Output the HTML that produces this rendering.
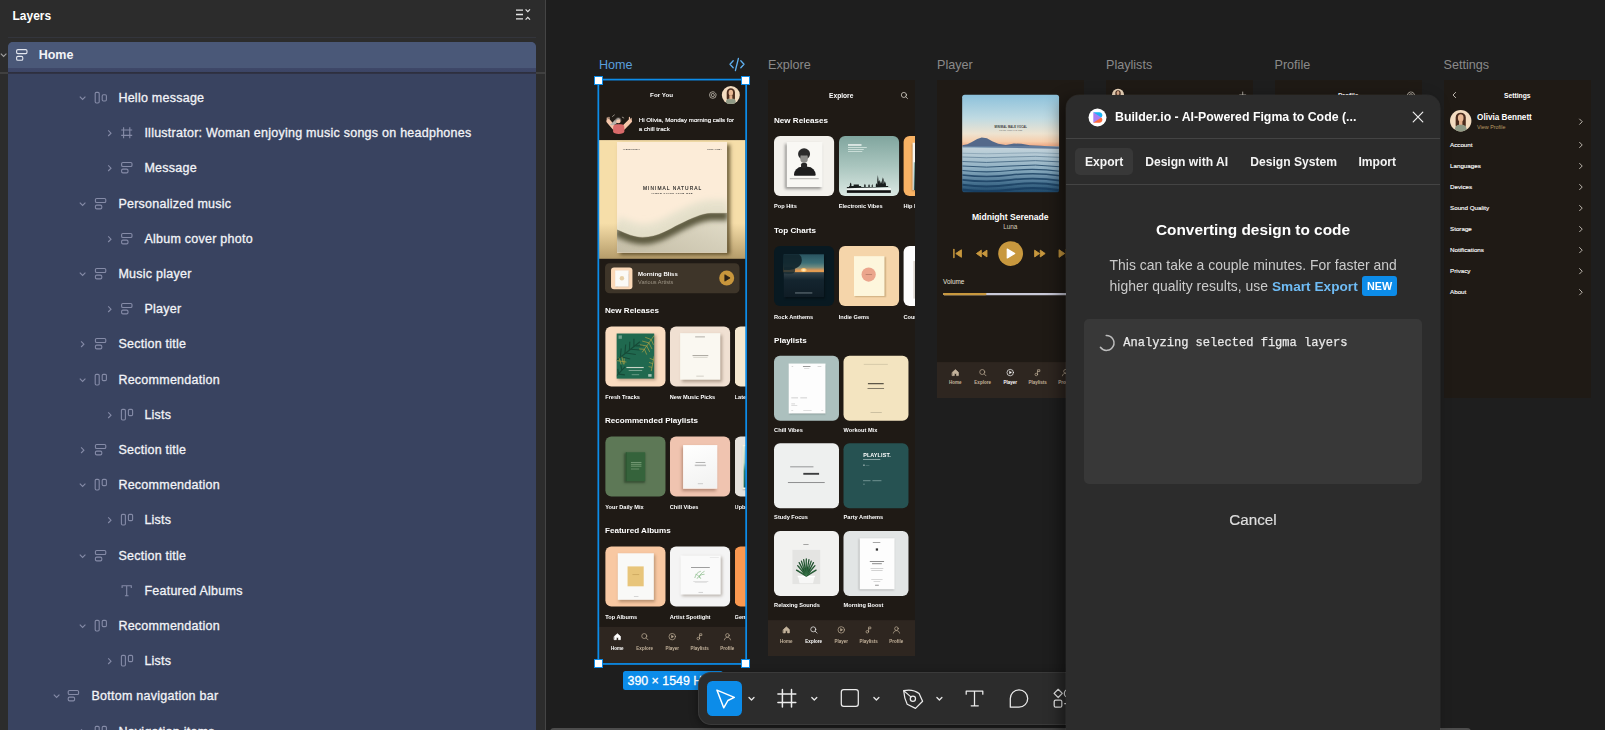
<!DOCTYPE html>
<html lang="en">
<head>
<meta charset="utf-8">
<title>Figma – Music App</title>
<style>
*{box-sizing:border-box;margin:0;padding:0}
html,body{width:1605px;height:730px;overflow:hidden;background:#1e1e1e;font-family:"Liberation Sans",sans-serif;color:#fff}
.abs{position:absolute}
/* ---------- layers panel ---------- */
#panel{position:absolute;left:0;top:0;width:546px;height:730px;background:#2c2c2c;border-right:1px solid #444;overflow:hidden}
#panel .title{position:absolute;left:12.5px;top:8px;font-size:12px;font-weight:bold;line-height:16px;color:#fff}
#sel{position:absolute;left:8px;top:42px;width:528px;height:700px;background:#394360;border-radius:5px 5px 0 0}
#homerow{position:absolute;left:8px;top:42px;width:528px;height:30px;background:linear-gradient(#4a5878 0,#4a5878 26px,#3e4768 26.500px,#3c4565 30px);border-radius:5px 5px 0 0}
#hline{position:absolute;left:0;top:72px;width:545px;height:1.500px;background:#404040}
#hline2{position:absolute;left:8px;top:72px;width:528px;height:2px;background:linear-gradient(#2c2e3a,#31344a)}
#tline{position:absolute;left:8px;top:37px;width:528px;height:1px;background:#33353c}
.row{position:absolute;left:0;height:20px;font-size:12.5px;letter-spacing:.25px;line-height:20px;color:#f2f3f7;white-space:nowrap;-webkit-text-stroke:0.3px #f2f3f7}
.row span{position:absolute;top:0}
/* ---------- canvas ---------- */
#canvas{position:absolute;left:546px;top:0;width:1059px;height:730px;background:#1e1e1e;overflow:hidden}
.flabel{position:absolute;top:57px;font-size:12.6px;line-height:16px;color:#8a8a8a;white-space:nowrap}
.frame{position:absolute;background:#1f1a15;overflow:hidden}
.fc{position:absolute;top:0;width:390px;height:1600px;transform:scale(.3756);transform-origin:0 0}
.frame .t{position:absolute;white-space:nowrap;line-height:1;color:#fff}
.frame .sec{position:absolute;left:16px;font-size:21.5px;font-weight:bold;line-height:24px;color:#fff;white-space:nowrap}
.frame .card{position:absolute;width:160px;height:160px;border-radius:16px;overflow:hidden}
.frame .card.g{width:173px;height:173px}
.frame .card i{position:absolute;display:block;font-style:normal}
.frame .cl{position:absolute;font-size:15px;font-weight:bold;line-height:18px;color:#fff;white-space:nowrap}
.frame .hdr{position:absolute;top:30px;left:0;width:390px;text-align:center;font-size:17px;font-weight:bold;line-height:22px;color:#fff}
.nav{position:absolute;left:-2px;width:396px;height:110px;background:#2e2620}
.nav .ni{position:absolute;top:0;width:74px;height:94px;margin-left:2px;text-align:center;color:#c4b39c;font-size:12px;font-weight:bold}
.nav .ni svg{position:absolute;left:25px;top:14px;width:24px;height:24px;fill:none;stroke:#c4b39c;stroke-width:1.8;stroke-linecap:round;stroke-linejoin:round}
.nav .ni span{position:absolute;left:0;top:48px;width:74px;line-height:16px}
.nav .ni.on{color:#fff}
.nav .ni.on svg{stroke:#fff}
.avatar{position:absolute;border-radius:50%;background:#f3dcc0;overflow:hidden}
.avatar i{position:absolute;display:block}
.shadow{box-shadow:4px 5px 8px rgba(60,40,20,.35)}
.srow{position:absolute;left:16px;width:358px;height:24px;font-size:16.600px;line-height:24px;color:#fff;-webkit-text-stroke:.35px #fff}
.srow svg{position:absolute;right:0;top:2px}
/* ---------- overlay ---------- */
.hd{position:absolute;width:9.200px;height:9.200px;background:#fff;border:1.400px solid #0c8ce9}
#sizepill{position:absolute;left:76.700px;top:671px;width:100px;height:19px;border-radius:2.500px;background:#0c8ce9;color:#fff;font-size:12.400px;line-height:21.500px;padding-left:4.800px;white-space:nowrap;-webkit-text-stroke:.3px #fff}
/* ---------- toolbar ---------- */
#toolbar{position:absolute;left:698px;top:672px;width:420px;height:52.700px;border-radius:13px;background:#2c2c2c;box-shadow:inset 0 0 0 1px rgba(255,255,255,.07),0 2px 8px rgba(0,0,0,.4)}
#toolbar .act{position:absolute;left:9.100px;top:9px;width:35px;height:35px;border-radius:5.500px;background:#0c8ce9}
#toolbar svg{position:absolute;left:0;top:0}
/* ---------- dialog ---------- */
#dialog{position:absolute;left:1066px;top:95px;width:374px;height:660px;border-radius:13px 13px 0 0;background:#2c2c2c;box-shadow:0 0 0 .5px rgba(255,255,255,.07),-6px 4px 16px rgba(0,0,0,.45);color:#fff}
#dialog .hl{position:absolute;left:0;width:374px;height:1px;background:#444}
#dialog .ttl{position:absolute;left:49px;top:13px;font-size:12.340px;font-weight:bold;line-height:18px;white-space:nowrap}
#dialog .tab{position:absolute;top:58px;font-size:12.100px;font-weight:bold;line-height:18px;white-space:nowrap;color:#f4f4f4}
#dialog .tabbg{position:absolute;left:9px;top:53px;width:58px;height:27px;border-radius:5px;background:#383838}
#dialog h2{position:absolute;left:0;top:124px;width:374px;text-align:center;font-size:15.400px;font-weight:bold;line-height:22px;color:#fff}
#dialog p{position:absolute;left:43.600px;top:160.300px;width:300px;font-size:13.900px;letter-spacing:.035px;line-height:20.400px;color:#cbcbcb;white-space:nowrap}
#dialog p b{color:#6fbcf5;font-size:13.600px}
#dialog p em{display:inline-block;font-style:normal;font-weight:bold;font-size:10.800px;line-height:20px;height:20.300px;width:34.500px;text-align:center;background:#0c8ce9;color:#fff;border-radius:3px;margin-left:4.600px;vertical-align:1px}
#dialog .box{position:absolute;left:18px;top:224px;width:338px;height:164.500px;border-radius:5px;background:#383838}
#dialog .mono{position:absolute;left:57.300px;top:239.300px;font-family:"Liberation Mono",monospace;font-size:12.060px;line-height:18px;color:#e9e9e9;white-space:nowrap;-webkit-text-stroke:.25px #e9e9e9}
#dialog .cancel{position:absolute;left:0;top:414px;width:374px;text-align:center;font-size:15.200px;line-height:22px;color:#dedede;-webkit-text-stroke:.2px #dedede}
#hscroll{position:absolute;left:550px;top:728px;width:921px;height:8px;border-radius:4px;background:#4d4d4d}
</style>
</head>
<body>
<div id="canvas">
  <div class="flabel" style="left:53px;color:#5a9fdc">Home</div>
  <div class="flabel" style="left:222px">Explore</div>
  <div class="flabel" style="left:391px">Player</div>
  <div class="flabel" style="left:560px">Playlists</div>
  <div class="flabel" style="left:728.500px">Profile</div>
  <div class="flabel" style="left:897.500px">Settings</div>
<div class="frame" style="left:52.65px;top:80.20px;width:146.95px;height:583.30px"><div class="fc" style="left:0.35px;top:-0.20px">
<div class="t" style="left:136px;top:31px;font-size:16.6px;font-weight:bold;line-height:20px">For You</div>
<svg class="abs" style="left:291px;top:28px" width="24" height="24" viewBox="0 0 24 24" fill="none" stroke="#e9e2d6" stroke-width="1.7"><circle cx="12" cy="12" r="4.2"/><path d="M12 3.2a8.8 8.8 0 1 0 8.8 8.8" /><path d="M12 3.2c3 .2 5.2 1.4 6.9 3.6M20.8 12c0-1.800-.6-3.500-1.500-4.900" /></svg>
<div class="avatar" style="left:327px;top:16px;width:48px;height:48px"><i style="left:13px;top:6px;width:22px;height:34px;border-radius:11px 11px 8px 8px;background:#4a2c1d"></i><i style="left:18px;top:10px;width:12px;height:16px;border-radius:50%;background:#e8b894"></i><i style="left:11px;top:33px;width:26px;height:18px;border-radius:10px 10px 0 0;background:#8f9a86"></i><i style="left:20px;top:25px;width:8px;height:10px;background:#e2ae8a"></i></div>
<svg class="abs" style="left:14px;top:90px" width="80" height="56" viewBox="14 90 80 56" fill="none"><g stroke="#f5c6aa" stroke-width="11" stroke-linecap="round"><path d="M40 127L25 109.500M65 127L82.500 109.500"/></g><g stroke="#f5c6aa" stroke-width="3" stroke-linecap="round"><path d="M22 106v-5M26.500 105.500v-6M81 105.500v-6M85.500 106v-4"/></g><path d="M37.500 138v-11a9 9 0 0 1 9-9h12a9 9 0 0 1 9 9v11a15 5.500 0 0 1-30 0z" fill="#d96a6a"/><path d="M46 104c-7 3-9 11-17 15 7 3 15 1 19-5z" fill="#b9b2ab"/><circle cx="51.500" cy="109" r="6.400" fill="#f3c9b0"/><path d="M44.800 108a6.800 6.800 0 0 1 13.200-2.500c-4.500-1.500-9 0-13.200 2.500z" fill="#a59e98"/><path d="M44.500 110v-3a7 7 0 0 1 14 0v3" stroke="#6e6a66" stroke-width="1.500"/><path d="M36 97l5-4M62 99l4 2" stroke="#e9e2d6" stroke-width="1.500" stroke-linecap="round"/></svg>
<div class="t" style="left:106px;top:94px;font-size:16.2px;line-height:24px;white-space:normal;width:270px;-webkit-text-stroke:.4px #fff;letter-spacing:.1px">Hi Olivia, Monday morning calls for<br>a chill track</div>
<div class="abs" style="left:0;top:160px;width:390px;height:316px;background:linear-gradient(#f6dea9 0,#f6dea9 70%,#b59c6a 100%)"></div>
<div class="abs" style="left:48px;top:165px;width:293px;height:295px;background:#fcecd8;box-shadow:8px 7px 10px rgba(50,38,10,.7);overflow:hidden"><svg class="abs" style="left:0;top:0" width="293" height="295" viewBox="0 0 293 295"><defs><filter id="b1" filterUnits="userSpaceOnUse" x="-60" y="60" width="420" height="300"><feGaussianBlur stdDeviation="9"/></filter><filter id="b2" filterUnits="userSpaceOnUse" x="-60" y="60" width="420" height="300"><feGaussianBlur stdDeviation="7"/></filter><clipPath id="cu"><path d="M-2 233C25 245 45 254 68 254c42 0 72-22 97-34 35-17 60-29 85-30 15-.5 30 0 45 0V-5H-2z"/></clipPath><clipPath id="cl"><path d="M-2 233C25 245 45 254 68 254c42 0 72-22 97-34 35-17 60-29 85-30 15-.5 30 0 45 0V300H-2z"/></clipPath><linearGradient id="lw" x1="0" y1="1" x2="1" y2="0"><stop offset="0" stop-color="#c4bda6"/><stop offset=".55" stop-color="#d5cfba"/><stop offset="1" stop-color="#e6e1cd"/></linearGradient></defs><g clip-path="url(#cu)"><path d="M-2 233C25 245 45 254 68 254c42 0 72-22 97-34 35-17 60-29 85-30 15-.5 30 0 45 0" transform="translate(0,-14)" fill="none" stroke="#e7e2cd" stroke-width="44" filter="url(#b1)"/><path d="M-2 233C25 245 45 254 68 254c42 0 72-22 97-34 35-17 60-29 85-30 15-.5 30 0 45 0" transform="translate(0,-5)" fill="none" stroke="#dedac3" stroke-width="12" filter="url(#b2)" opacity=".7"/></g><g clip-path="url(#cl)"><rect x="0" y="180" width="293" height="115" fill="url(#lw)"/><path d="M-2 233C25 245 45 254 68 254c42 0 72-22 97-34 35-17 60-29 85-30 15-.5 30 0 45 0" transform="translate(0,6)" fill="none" stroke="#5d5a40" stroke-width="26" filter="url(#b2)"/></g><path d="M-2 233C25 245 45 254 68 254c42 0 72-22 97-34 35-17 60-29 85-30 15-.5 30 0 45 0" fill="none" stroke="#6a6649" stroke-width="1.200" opacity=".8"/></svg><div class="t" style="left:0;width:293px;top:117px;text-align:center;font-size:13px;letter-spacing:2.700px;color:#1f1f1f;padding-left:3px;-webkit-text-stroke:.35px #1f1f1f">MINIMAL NATURAL</div><div class="t" style="left:0;width:293px;top:134px;text-align:center;font-size:6.200px;font-weight:bold;letter-spacing:1.500px;color:#2a2a2a">ALBUM COVER FROM WEB</div><div class="t" style="left:15px;top:17px;font-size:5.500px;font-weight:bold;letter-spacing:.3px;color:#444">ALBUM STUDIO</div><div class="t" style="right:15px;top:17px;font-size:5.500px;font-weight:bold;letter-spacing:.3px;color:#444">SONG 1 2024</div></div>
<div class="abs" style="left:16px;top:488px;width:358px;height:80px;border-radius:12px;background:#3e3529"></div>
<div class="abs" style="left:32px;top:499px;width:57px;height:58px;border-radius:8px;background:#fbd9b8"><i class="abs" style="left:11px;top:8px;width:36px;height:43px;background:#fbfaf6;box-shadow:1px 2px 3px rgba(0,0,0,.25)"></i><i class="abs" style="left:23px;top:23px;width:12px;height:12px;border-radius:50%;background:#e6cfa6"></i></div>
<div class="t" style="left:104px;top:508px;font-size:16px;font-weight:bold;line-height:20px">Morning Bliss</div>
<div class="t" style="left:104px;top:529px;font-size:14.9px;line-height:18px;color:#9c9384">Various Artists</div>
<div class="abs" style="left:320px;top:507px;width:40px;height:40px;border-radius:50%;background:#c8963c"><svg class="abs" style="left:0;top:0" width="40" height="40" viewBox="0 0 40 40"><path d="M15 11.500v17l14-8.500z" fill="#2a2016" stroke="#2a2016" stroke-width="2" stroke-linejoin="round"/></svg></div>
<div class="sec" style="top:602px">New Releases</div>
<div class="card" style="left:16.5px;top:655.5px;background:#fadcc0"><i class="shadow" style="left:30px;top:19px;width:100px;height:120px;background:#20694f;overflow:hidden"><svg width="100" height="120" viewBox="0 0 100 120" style="position:absolute;left:0;top:0"><g stroke="#164a37" stroke-width="3" fill="none"><path d="M-5 75L62 22"/><path d="M10 62l2-22M22 53l2-24M34 44l1-22M46 34l0-20M12 62l24 6M25 52l26 4M38 42l24 2M50 33l20 0"/><path d="M-5 118l28-30M5 108l-2-14M14 98l-3-14M6 108l16 2"/></g><g stroke="#c7ad45" stroke-width="1.6" fill="none"><path d="M100 5L68 50"/><path d="M92 16l-16-6M86 25l-18-5M80 33l-18-3M74 42l-14-1M92 16l6 14M86 25l8 16M80 33l8 16M74 42l6 14"/><path d="M0 72l26 4M6 64l6 18M14 62l4 20M20 66l0 16M100 60l-8 40M98 70l-10-4M96 80l-10-3M94 90l-9-2"/></g></svg><b style="position:absolute;left:26px;top:89px;width:46px;height:3px;background:#e7e7da;opacity:.85"></b><b style="position:absolute;left:32px;top:97px;width:36px;height:2px;background:#cfe0d0;opacity:.7"></b><b style="position:absolute;left:40px;top:108px;width:20px;height:3px;background:#9fc0ae;opacity:.5"></b><b style="position:absolute;left:84px;top:108px;width:9px;height:7px;background:#dfe8df;opacity:.7"></b><b style="position:absolute;left:5px;top:5px;width:9px;height:9px;background:#bcd6c8;opacity:.5"></b></i></div>
<div class="cl" style="left:16.5px;top:836.0px">Fresh Tracks</div>
<div class="card" style="left:188.5px;top:655.5px;background:#f0e0d2"><i class="shadow" style="left:27px;top:18px;width:107px;height:124px;background:#faf8f1"></i><i style="left:67px;top:27px;width:26px;height:2px;background:#9a978f"></i><i style="left:60px;top:77px;width:42px;height:2px;background:#8c8980"></i><i style="left:62px;top:82px;width:38px;height:1.5px;background:#aaa79e"></i><i style="left:70px;top:131px;width:20px;height:3px;background:#d8d5cc"></i></div>
<div class="cl" style="left:188.5px;top:836.0px">New Music Picks</div>
<div class="card" style="left:361px;top:655.5px;background:#f5e8d0"></div>
<div class="cl" style="left:361px;top:836.0px">Latest Hits</div>
<div class="sec" style="top:895px">Recommended Playlists</div>
<div class="card" style="left:16.5px;top:948.5px;background:#5d7856"><i style="left:54px;top:42px;width:52px;height:77px;background:#35633b;box-shadow:-3px 4px 6px rgba(20,40,20,.5),inset 3px 0 0 #2d5632;border-radius:1px"></i><i style="left:68px;top:68px;width:28px;height:2px;background:#86a883"></i><i style="left:68px;top:73px;width:28px;height:2px;background:#86a883"></i><i style="left:68px;top:78px;width:28px;height:2px;background:#86a883"></i><i style="left:68px;top:84px;width:22px;height:1.500px;background:#7a9c77"></i><i style="left:68px;top:88px;width:22px;height:1.500px;background:#7a9c77"></i></div>
<div class="cl" style="left:16.5px;top:1129.0px">Your Daily Mix</div>
<div class="card" style="left:188.5px;top:948.5px;background:#f0c4b0"><i style="left:35px;top:23px;width:91px;height:116px;background:linear-gradient(160deg,#fff,#f1f1f0);box-shadow:-4px 5px 8px rgba(90,50,30,.4)"></i><i style="left:68px;top:68px;width:26px;height:2px;background:#9b9b9b"></i><i style="left:66px;top:75px;width:30px;height:4px;background:#c2c2c2"></i><i style="left:74px;top:125px;width:14px;height:2px;background:#bdbdbd"></i></div>
<div class="cl" style="left:188.5px;top:1129.0px">Chill Vibes</div>
<div class="card" style="left:361px;top:948.5px;background:#e6e2dd"><i style="left:21px;top:22px;width:30px;height:118px;background:#f6f1dc;box-shadow:2px 3px 5px rgba(0,0,0,.3)"></i><i style="left:24px;top:26px;width:27px;height:110px;background:linear-gradient(#cfe0d6 0,#9cc5b8 40%,#2c7a6c 60%,#1f5f58 100%)"></i></div>
<div class="cl" style="left:361px;top:1129.0px">Upbeat</div>
<div class="sec" style="top:1188px">Featured Albums</div>
<div class="card" style="left:16.5px;top:1241.5px;background:#f8c8a2"><i class="shadow" style="left:33px;top:18px;width:96px;height:124px;background:#f9f9f7"></i><i style="left:59px;top:53px;width:43px;height:53px;background:#e8c57a"></i><i style="left:72px;top:74px;width:18px;height:2px;background:#c9a55c"></i><i style="left:76px;top:132px;width:12px;height:2px;background:#c9c9c9"></i></div>
<div class="cl" style="left:16.5px;top:1422.0px">Top Albums</div>
<div class="card" style="left:188.5px;top:1241.5px;background:#f4f4f4"><i class="shadow" style="left:28px;top:24px;width:107px;height:104px;background:#fafafa"></i><i style="left:56px;top:55px;width:50px;height:2.5px;background:#808080"></i><svg style="position:absolute;left:62px;top:62px" width="40" height="26" viewBox="0 0 40 26"><g fill="none" stroke="#8fbf8f" stroke-width="2"><path d="M4 22c2-10 8-16 16-18M10 24c4-8 10-12 20-12M16 22c0-8 6-14 14-18M6 12c6 2 12 6 14 12"/></g></svg><i style="left:62px;top:92px;width:40px;height:1.500px;background:#b0b0b0"></i><i style="left:66px;top:96px;width:32px;height:1.500px;background:#c0c0c0"></i><i style="left:76px;top:121px;width:12px;height:2px;background:#c5c5c5"></i><i style="left:106px;top:28px;width:24px;height:1.500px;background:#cfcfcf"></i></div>
<div class="cl" style="left:188.5px;top:1422.0px">Artist Spotlight</div>
<div class="card" style="left:361px;top:1241.5px;background:#fa9850"></div>
<div class="cl" style="left:361px;top:1422.0px">Genre Mix</div>
<div class="nav" style="top:1455.5px"><div class="ni on" style="left:11.5px"><svg viewBox="0 0 24 24"><path d="M4 11.2L12 4l8 7.2V20h-5.2v-5.6H9.2V20H4z" fill="#fff"/></svg><span style="top:49px">Home</span></div><div class="ni" style="left:84.5px"><svg viewBox="0 0 24 24"><circle cx="10.5" cy="10.5" r="6.7"/><path d="M15.6 15.6L20.5 20.5"/></svg><span style="top:49px">Explore</span></div><div class="ni" style="left:158px"><svg viewBox="0 0 24 24"><circle cx="12" cy="12" r="8.6"/><path d="M10 8.6v6.8l5.4-3.4z" fill="#c4b39c" stroke-width="1"/></svg><span style="top:49px">Player</span></div><div class="ni" style="left:231px"><svg viewBox="0 0 24 24"><circle cx="8.4" cy="17" r="3.4"/><path d="M11.800 17V4.400h6v4.600h-6"/></svg><span style="top:49px">Playlists</span></div><div class="ni" style="left:304.5px"><svg viewBox="0 0 24 24"><circle cx="12" cy="8.6" r="4.8"/><path d="M3.8 20.6c.8-4.200 3.800-6.600 8.200-6.600s7.400 2.400 8.200 6.600"/></svg><span style="top:49px">Profile</span></div></div>
</div></div>
<div class="frame" style="left:222.07px;top:80.10px;width:146.90px;height:576.00px"><div class="fc" style="left:-0.05px;top:-0.10px">
<div class="hdr" style="font-size:17.6px">Explore</div>
<svg class="abs" style="left:351px;top:29px" width="24" height="24" viewBox="0 0 24 24" fill="none" stroke="#f1ebe2" stroke-width="1.800" stroke-linecap="round"><circle cx="10.800" cy="10.800" r="6.800"/><path d="M15.900 15.900L20.500 20.500"/></svg>
<div class="sec" style="top:95px">New Releases</div>
<div class="card" style="left:16px;top:148.5px;background:#f3f1ec"><i style="left:34px;top:16px;width:95px;height:120px;background:#f9f8f4;box-shadow:-5px 5px 7px rgba(40,40,40,.45)"></i><i style="left:64px;top:33px;width:32px;height:30px;border-radius:50%;background:#2b2b2b"></i><i style="left:70px;top:46px;width:20px;height:26px;border-radius:45%;background:#8d8d8a"></i><i style="left:67px;top:40px;width:26px;height:12px;border-radius:50% 50% 30% 30%;background:#2b2b2b"></i><i style="left:53px;top:82px;width:58px;height:24px;border-radius:26px 26px 3px 3px;background:#1e1e1e"></i><i style="left:72px;top:72px;width:16px;height:14px;background:#262626;border-radius:4px"></i><i style="left:42px;top:113px;width:77px;height:2.500px;background:#9a9a98"></i></div>
<div class="cl" style="left:16px;top:328.0px">Pop Hits</div>
<div class="card" style="left:188.5px;top:148.5px;background:linear-gradient(#80a59e,#a9c5be 50%,#dbe8e3)"><i style="left:24px;top:22px;width:36px;height:4px;background:#eef5f2"></i><i style="left:24px;top:30px;width:50px;height:2px;background:#dcebe6"></i><i style="left:24px;top:35px;width:42px;height:2px;background:#dcebe6"></i><i style="left:24px;top:40px;width:38px;height:2px;background:#dcebe6"></i><svg style="position:absolute;left:0;top:0" width="160" height="160" viewBox="0 0 160 160"><rect x="21" y="138.500" width="117" height="6" fill="#f4f8f6"/><rect x="21" y="144.500" width="117" height="7" fill="#111"/><path d="M21 139V136h6v-3h2v-5l2-4 2 4v5h6v-4h14v4h6v3h8v-5l2-4 2 4v5h7v-4l2-4 2 4v4h5v-4l1.500-4 1.500 4v4h8v-6l2-5 2 5v-14l1.500-12 1.500 12v6l2-5 2 5v6l3-9 3 9v-11l2-7 2 7v11l3-8 3 8v5h6v3z" fill="#1a1f1f"/></svg></div>
<div class="cl" style="left:188.5px;top:328.0px">Electronic Vibes</div>
<div class="card" style="left:360.5px;top:148.5px;background:#f8b264"><i style="left:24px;top:18px;width:40px;height:126px;background:#f7f5ef;box-shadow:-2px 3px 5px rgba(0,0,0,.3)"></i><i style="left:27px;top:70px;width:37px;height:74px;background:linear-gradient(#8fb3aa,#264a4c)"></i></div>
<div class="cl" style="left:360.5px;top:328.0px">Hip Hop</div>
<div class="sec" style="top:388px">Top Charts</div>
<div class="card" style="left:16px;top:441.5px;background:#081921"><i style="left:26px;top:22px;width:107px;height:114px;background:linear-gradient(#29535f 0,#3c6f77 20%,#6f8a7f 30%,#dc9858 37%,#f2a350 40%,#33434b 43%,#14252f 60%,#0f1c25 100%);box-shadow:3px 4px 6px rgba(0,0,0,.5);overflow:hidden"><b style="position:absolute;left:44px;top:36px;width:18px;height:12px;border-radius:50%;background:radial-gradient(#fff6dc,#ffc36a 50%,rgba(240,160,80,0) 72%)"></b><b style="position:absolute;left:-14px;top:-8px;width:62px;height:50px;border-radius:40% 60% 70% 30%;background:#10242b;opacity:.92"></b><b style="position:absolute;left:-4px;top:34px;width:34px;height:18px;border-radius:40%;background:#132830;opacity:.8"></b><b style="position:absolute;left:30px;top:102px;width:46px;height:2.500px;background:#a9b7bb;opacity:.8"></b></i></div>
<div class="cl" style="left:16px;top:621.0px">Rock Anthems</div>
<div class="card" style="left:188.5px;top:441.5px;background:#f5d5aa"><i style="left:40px;top:27px;width:81px;height:106px;background:#fdf6dc;box-shadow:3px 3px 3px rgba(150,120,70,.4)"></i><i style="left:60px;top:57px;width:38px;height:38px;border-radius:50%;background:#eba58c"></i><i style="left:71px;top:75px;width:17px;height:2px;background:#b27a66"></i></div>
<div class="cl" style="left:188.5px;top:621.0px">Indie Gems</div>
<div class="card" style="left:360.5px;top:441.5px;background:#fdfdfd"><i style="left:26px;top:40px;width:20px;height:100px;background:#dcd6cf"></i></div>
<div class="cl" style="left:360.5px;top:621.0px">Country</div>
<div class="sec" style="top:679.500px">Playlists</div>
<div class="card g" style="left:16.3px;top:733.5px;background:#acc0be"><i style="left:39px;top:21px;width:98px;height:133px;background:#fdfdfd;box-shadow:2px 3px 4px rgba(40,60,60,.35)"></i><i style="left:77px;top:28px;width:20px;height:2.5px;background:#777"></i><i style="left:80px;top:33px;width:14px;height:1.5px;background:#aaa"></i><i style="left:47px;top:28px;width:4px;height:1.5px;background:#999"></i><i style="left:116px;top:28px;width:10px;height:1.5px;background:#999"></i><i style="left:46px;top:112px;width:18px;height:1.5px;background:#888"></i><i style="left:70px;top:112px;width:18px;height:1.5px;background:#888"></i><i style="left:46px;top:128px;width:10px;height:1.5px;background:#999"></i><i style="left:46px;top:132px;width:16px;height:1.5px;background:#aaa"></i><i style="left:46px;top:145px;width:5px;height:1.5px;background:#aaa"></i><i style="left:78px;top:145px;width:22px;height:1.5px;background:#aaa"></i><i style="left:126px;top:145px;width:5px;height:1.5px;background:#aaa"></i></div>
<div class="cl" style="left:16.3px;top:922.5px">Chill Vibes</div>
<div class="card g" style="left:201.3px;top:733.5px;background:#f3e4c0"><i style="left:54px;top:22px;width:64px;height:1.8px;background:#a89f84"></i><i style="left:65px;top:73px;width:42px;height:3.5px;background:#4b4638"></i><i style="left:64px;top:86px;width:44px;height:2px;background:#5e584a"></i><i style="left:72px;top:150px;width:30px;height:1.8px;background:#8b846f"></i></div>
<div class="cl" style="left:201.3px;top:922.5px">Workout Mix</div>
<div class="card g" style="left:16.3px;top:967.0px;background:#eef0ef"><i style="left:43px;top:62px;width:62px;height:2px;background:#77797a"></i><i style="left:78px;top:79px;width:42px;height:4.5px;background:#3c3e3f"></i><i style="left:37px;top:104px;width:98px;height:2px;background:#6d6f70"></i></div>
<div class="cl" style="left:16.3px;top:1156.0px">Study Focus</div>
<div class="card g" style="left:201.3px;top:967.0px;background:#265252"><div class="t" style="left:52px;top:24px;font-size:14.500px;font-weight:bold;letter-spacing:.3px">PLAYLIST.</div><i style="left:52px;top:42px;width:46px;height:2px;background:#a9c1c0"></i><i style="left:53px;top:57px;width:3px;height:3px;background:#e8f0ef"></i><i style="left:59px;top:57.5px;width:10px;height:1.5px;background:#7fa09f"></i><i style="left:52px;top:99px;width:20px;height:2px;background:#86a5a4"></i><i style="left:77px;top:99px;width:24px;height:2px;background:#86a5a4"></i><i style="left:53px;top:108px;width:3px;height:2px;background:#a9c1c0"></i></div>
<div class="cl" style="left:201.3px;top:1156.0px">Party Anthems</div>
<div class="card g" style="left:16.3px;top:1200.5px;background:#f2f2f0"><i style="left:48.700px;top:50.300px;width:74px;height:91.500px;background:#e4e4e2"></i><i style="left:78px;top:35px;width:14px;height:2px;background:#8a8a8a"></i><svg style="position:absolute;left:48.700px;top:50.300px" width="74" height="92" viewBox="0 0 74 92"><path d="M15 70h44l-4 19H19z" fill="#f7f7f6"/><path d="M14 69h46v4H14z" fill="#fff"/><g stroke="#21512f" stroke-width="3.400" stroke-linecap="round" fill="none"><path d="M37 70V24M37 70L24 30M37 70L50 30M37 70L14 42M37 70L60 42M37 70L30 26M37 70L44 26M37 70L11 54M37 70L63 54M37 70L18 34M37 70L56 34"/></g><g stroke="#3f7f50" stroke-width="1.500" stroke-linecap="round" fill="none"><path d="M37 68V28M37 68L26 34M37 68L48 34M37 68L18 44M37 68L56 44M37 68L15 55M37 68L59 55"/></g></svg></div>
<div class="cl" style="left:16.3px;top:1389.5px">Relaxing Sounds</div>
<div class="card g" style="left:201.3px;top:1200.5px;background:#e2e5e5"><i style="left:43px;top:19px;width:92.500px;height:136px;background:#fdfdfd;box-shadow:-2px 3px 5px rgba(60,60,60,.35)"></i><i style="left:78px;top:29px;width:20px;height:2px;background:#888"></i><i style="left:86px;top:46px;width:6px;height:6px;background:#333"></i><i style="left:70px;top:80px;width:38px;height:2.2px;background:#666"></i><i style="left:76px;top:86px;width:26px;height:2.2px;background:#666"></i><i style="left:72px;top:99px;width:34px;height:1.8px;background:#888"></i><i style="left:74px;top:105px;width:30px;height:1.8px;background:#888"></i><i style="left:74px;top:129px;width:30px;height:1.5px;background:#999"></i><i style="left:80px;top:134px;width:18px;height:1.5px;background:#999"></i><i style="left:84px;top:143px;width:10px;height:2px;background:#777"></i></div>
<div class="cl" style="left:201.3px;top:1389.5px">Morning Boost</div>
<div class="nav" style="top:1437.6px"><div class="ni" style="left:11.5px"><svg viewBox="0 0 24 24"><path d="M4 11.2L12 4l8 7.2V20h-5.2v-5.6H9.2V20H4z" fill="#c4b39c"/></svg><span>Home</span></div><div class="ni on" style="left:84.5px"><svg viewBox="0 0 24 24"><circle cx="10.5" cy="10.5" r="6.7"/><path d="M15.6 15.6L20.5 20.5"/></svg><span>Explore</span></div><div class="ni" style="left:158px"><svg viewBox="0 0 24 24"><circle cx="12" cy="12" r="8.6"/><path d="M10 8.6v6.8l5.4-3.4z" fill="#c4b39c" stroke-width="1"/></svg><span>Player</span></div><div class="ni" style="left:231px"><svg viewBox="0 0 24 24"><circle cx="8.4" cy="17" r="3.4"/><path d="M11.800 17V4.400h6v4.600h-6"/></svg><span>Playlists</span></div><div class="ni" style="left:304.5px"><svg viewBox="0 0 24 24"><circle cx="12" cy="8.6" r="4.8"/><path d="M3.8 20.6c.8-4.200 3.800-6.600 8.200-6.600s7.400 2.400 8.200 6.600"/></svg><span>Profile</span></div></div>
</div></div>
<div class="frame" style="left:391.05px;top:80.20px;width:146.90px;height:317.60px"><div class="fc" style="left:-0.01px;top:-0.20px">
<div class="abs" style="left:66.500px;top:39px;width:258.500px;height:260px;border-radius:7px;overflow:hidden;background:linear-gradient(#8cc1db 0,#bfdae2 24%,#eee3d0 40%,#f6cfad 48%,#efaa85 52.500%,#c3d3db 54%,#b3c9d4 62%,#8eafc2 76%,#45708f 91%,#1f4869 100%)"><svg class="abs" style="left:0;top:0" width="260" height="260" viewBox="0 0 260 260"><path d="M0 139v-4l14-3 12-6 14-8 12-4 14 2 14 8 16 7 20 3 22-4 20 1 22 4 30 1 34 3 16 1v4z" fill="#54698a"/><path d="M0 138h260v3H0z" fill="#6f8fae"/><g stroke="#163c5e" fill="none" opacity=".78"><path d="M0 156q65 3 130 0t130 1" stroke-width=".8"/><path d="M0 166q65 4 130 0t130 1" stroke-width="1.300"/><path d="M0 178q65 5 130 0t130 1" stroke-width="2"/><path d="M0 190q65 6 130 0t130 2" stroke-width="2.600"/><path d="M0 202q65 7 130 0t130 2" stroke-width="3.200"/><path d="M0 214q65 8 130 0t130 2" stroke-width="3.800"/><path d="M0 227q65 8 130 0t130 2" stroke-width="4.400"/><path d="M0 240q65 9 130 0t130 2" stroke-width="5"/><path d="M0 253q65 9 130 0t130 2" stroke-width="6"/></g></svg><div class="t" style="left:0;width:260px;top:83px;text-align:center;font-size:7px;font-weight:bold;letter-spacing:.5px;color:#333">MINIMAL MALE VOCAL</div><div class="t" style="left:0;width:260px;top:93px;text-align:center;font-size:4.500px;letter-spacing:.5px;color:#666">COVER FROM THE WEB</div></div>
<div class="t" style="left:0;width:390px;text-align:center;top:353px;font-size:22.800px;font-weight:bold;line-height:26px">Midnight Serenade</div>
<div class="t" style="left:0;width:390px;text-align:center;top:383px;font-size:17px;line-height:18px;color:#d6cbbb">Luna</div>
<svg class="abs" style="left:0;top:428px" width="390" height="68" viewBox="0 0 390 68"><circle cx="196" cy="34" r="33" fill="#c8983e"/><path d="M187 22v24l20-12z" fill="#fff" stroke="#fff" stroke-width="3" stroke-linejoin="round"/><g fill="#c8983e" stroke="#c8983e" stroke-width="2.500" stroke-linejoin="round"><path d="M45 23.500v21" stroke-width="4" stroke-linecap="round"/><path d="M65 24v20l-15-10z"/><path d="M118 25v18l-13-9z"/><path d="M133 25v18l-13-9z"/><path d="M260 25v18l13-9z"/><path d="M275 25v18l13-9z"/><path d="M325 24v20l15-10z"/><path d="M345 23.500v21" stroke-width="4" stroke-linecap="round"/></g></svg>
<div class="t" style="left:16px;top:529px;font-size:17px;line-height:18px;color:#ece6da">Volume</div>
<div class="abs" style="left:16px;top:566.500px;width:358px;height:6px;border-radius:3px;background:#c9c9d8"></div><div class="abs" style="left:16px;top:566.500px;width:116px;height:6px;border-radius:3px;background:#c8983e"></div>
<div class="nav" style="top:751px"><div class="ni" style="left:11.5px"><svg viewBox="0 0 24 24" style="top:15.5px"><path d="M4 11.2L12 4l8 7.2V20h-5.2v-5.6H9.2V20H4z" fill="#c4b39c"/></svg><span style="top:45.6px">Home</span></div><div class="ni" style="left:84.5px"><svg viewBox="0 0 24 24" style="top:15.5px"><circle cx="10.5" cy="10.5" r="6.7"/><path d="M15.6 15.6L20.5 20.5"/></svg><span style="top:45.6px">Explore</span></div><div class="ni on" style="left:158px"><svg viewBox="0 0 24 24" style="top:15.5px"><circle cx="12" cy="12" r="8.6"/><path d="M10 8.6v6.8l5.4-3.4z" fill="#fff" stroke-width="1"/></svg><span style="top:45.6px">Player</span></div><div class="ni" style="left:231px"><svg viewBox="0 0 24 24" style="top:15.5px"><circle cx="8.4" cy="17" r="3.4"/><path d="M11.800 17V4.400h6v4.600h-6"/></svg><span style="top:45.6px">Playlists</span></div><div class="ni" style="left:304.5px"><svg viewBox="0 0 24 24" style="top:15.5px"><circle cx="12" cy="8.6" r="4.8"/><path d="M3.8 20.6c.8-4.200 3.800-6.600 8.200-6.600s7.400 2.400 8.200 6.600"/></svg><span style="top:45.6px">Profile</span></div></div>
</div></div>
<div class="frame" style="left:560.00px;top:80.20px;width:146.90px;height:317.60px"><div class="fc" style="left:0.06px;top:-0.20px">
<div class="avatar" style="left:16px;top:23px;width:32px;height:32px"><i style="left:8.6px;top:3.8px;width:14.7px;height:23.7px;border-radius:7.4px 7.4px 5.1px 5.1px;background:#4a2c1d"></i><i style="left:12.0px;top:6.4px;width:8.0px;height:10.9px;border-radius:50%;background:#e8b894"></i><i style="left:13.4px;top:16.0px;width:5.1px;height:6.4px;background:#e2ae8a"></i><i style="left:7.4px;top:21.8px;width:17.3px;height:12.8px;border-radius:6.4px 6.4px 0 0;background:#8f9a86"></i></div>
<svg class="abs" style="left:352px;top:28px" width="24" height="24" viewBox="0 0 24 24" stroke="#f1ebe2" stroke-width="1.800" stroke-linecap="round"><path d="M12 4v16M4 12h16"/></svg>
</div></div>
<div class="frame" style="left:729.40px;top:80.20px;width:146.90px;height:317.60px"><div class="fc" style="left:-0.32px;top:-0.20px">
<div class="hdr" style="font-size:17.600px;top:31px">Profile</div>
<svg class="abs" style="left:350px;top:28px" width="24" height="24" viewBox="0 0 24 24" fill="none" stroke="#e9e2d6" stroke-width="1.700"><circle cx="12" cy="12" r="3.600"/><path d="M12 2.800l2.200 2.400 3.200-.6 1 3.100 3 1.400-1.200 3 1.200 3-3 1.400-1 3.100-3.200-.6-2.200 2.400-2.200-2.400-3.200.6-1-3.100-3-1.400 1.200-3-1.200-3 3-1.400 1-3.100 3.200.6z"/></svg>
</div></div>
<div class="frame" style="left:898.30px;top:80.20px;width:146.80px;height:317.60px"><div class="fc" style="left:-0.20px;top:-0.20px">
<svg class="abs" style="left:16px;top:28px" width="24" height="24" viewBox="0 0 24 24" fill="none" stroke="#f1ebe2" stroke-width="2" stroke-linecap="round" stroke-linejoin="round"><path d="M15 5l-7 7 7 7"/></svg>
<div class="hdr" style="font-size:18px;top:30.500px">Settings</div>
<div class="avatar" style="left:16px;top:80px;width:57px;height:57px"><i style="left:15.4px;top:6.8px;width:26.2px;height:42.2px;border-radius:13.1px 13.1px 9.1px 9.1px;background:#4a2c1d"></i><i style="left:21.4px;top:11.4px;width:14.2px;height:19.4px;border-radius:50%;background:#e8b894"></i><i style="left:23.9px;top:28.5px;width:9.1px;height:11.4px;background:#e2ae8a"></i><i style="left:13.1px;top:38.8px;width:30.8px;height:22.8px;border-radius:11.4px 11.4px 0 0;background:#8f9a86"></i></div>
<div class="t" style="left:88px;top:87px;font-size:21.700px;font-weight:bold;line-height:26px">Olivia Bennett</div>
<div class="t" style="left:88px;top:115.500px;font-size:14.400px;line-height:18px;color:#b99c64">View Profile</div>
<div class="srow" style="top:99px"><svg width="20" height="20" viewBox="0 0 20 20" fill="none" stroke="#f1ebe2" stroke-width="2" stroke-linecap="round" stroke-linejoin="round"><path d="M7 3l7 7-7 7"/></svg></div>
<div class="srow" style="top:161px">Account<svg width="20" height="20" viewBox="0 0 20 20" fill="none" stroke="#f1ebe2" stroke-width="2" stroke-linecap="round" stroke-linejoin="round"><path d="M7 3l7 7-7 7"/></svg></div>
<div class="srow" style="top:217px">Languages<svg width="20" height="20" viewBox="0 0 20 20" fill="none" stroke="#f1ebe2" stroke-width="2" stroke-linecap="round" stroke-linejoin="round"><path d="M7 3l7 7-7 7"/></svg></div>
<div class="srow" style="top:273px">Devices<svg width="20" height="20" viewBox="0 0 20 20" fill="none" stroke="#f1ebe2" stroke-width="2" stroke-linecap="round" stroke-linejoin="round"><path d="M7 3l7 7-7 7"/></svg></div>
<div class="srow" style="top:329px">Sound Quality<svg width="20" height="20" viewBox="0 0 20 20" fill="none" stroke="#f1ebe2" stroke-width="2" stroke-linecap="round" stroke-linejoin="round"><path d="M7 3l7 7-7 7"/></svg></div>
<div class="srow" style="top:385px">Storage<svg width="20" height="20" viewBox="0 0 20 20" fill="none" stroke="#f1ebe2" stroke-width="2" stroke-linecap="round" stroke-linejoin="round"><path d="M7 3l7 7-7 7"/></svg></div>
<div class="srow" style="top:441px">Notifications<svg width="20" height="20" viewBox="0 0 20 20" fill="none" stroke="#f1ebe2" stroke-width="2" stroke-linecap="round" stroke-linejoin="round"><path d="M7 3l7 7-7 7"/></svg></div>
<div class="srow" style="top:497px">Privacy<svg width="20" height="20" viewBox="0 0 20 20" fill="none" stroke="#f1ebe2" stroke-width="2" stroke-linecap="round" stroke-linejoin="round"><path d="M7 3l7 7-7 7"/></svg></div>
<div class="srow" style="top:553px">About<svg width="20" height="20" viewBox="0 0 20 20" fill="none" stroke="#f1ebe2" stroke-width="2" stroke-linecap="round" stroke-linejoin="round"><path d="M7 3l7 7-7 7"/></svg></div>
</div></div>
  <!-- selection overlay (canvas coords: screen x - 546) -->
  <svg class="abs" style="left:40px;top:70px" width="170" height="610" viewBox="40 70 170 610" fill="none"><rect x="52.350" y="79.600" width="147.800" height="584.350" stroke="#0c8ce9" stroke-width="1.750"/></svg>
  <div class="hd" style="left:48.050px;top:75.700px"></div>
  <div class="hd" style="left:195px;top:75.700px"></div>
  <div class="hd" style="left:48.050px;top:658.900px"></div>
  <div class="hd" style="left:195px;top:658.900px"></div>
  <svg class="abs" style="left:183px;top:57px" width="16" height="15" viewBox="0 0 16 15" fill="none" stroke="#5fb0f0" stroke-width="1.300" stroke-linecap="round" stroke-linejoin="round"><path d="M4.200 3.800L1 7.300l3.200 3.500M11.800 3.800L15 7.300l-3.200 3.500M9.400 1.500L6.400 13.500"/></svg>
  <div id="sizepill">390 × 1549 Hug</div>
</div>
<div id="panel">
  <div class="title">Layers</div>
  <svg class="abs" style="left:514px;top:8px" width="18" height="16" viewBox="0 0 18 16"><path d="M2 2.2h7M2 6.5h7M2 10.8h7" stroke="#e6e6e6" stroke-width="1.3" fill="none"/><path d="M11.6 1.4l2.2 2.2 2.2-2.2M11.6 11.6l2.2-2.2 2.2 2.2" stroke="#e6e6e6" stroke-width="1.2" fill="none"/></svg>
  <div id="sel"></div>
  <div id="homerow"></div>
  <div id="tline"></div><div id="hline"></div><div id="hline2"></div>
  <div class="row" style="top:44.8px;font-weight:bold;-webkit-text-stroke:0;letter-spacing:0"><span style="left:38.7px">Home</span></div>
  <div class="row" style="top:87.5px"><span style="left:118.4px">Hello message</span></div>
  <div class="row" style="top:122.5px"><span style="left:144.4px">Illustrator: Woman enjoying music songs on headphones</span></div>
  <div class="row" style="top:157.5px"><span style="left:144.4px">Message</span></div>
  <div class="row" style="top:193.5px"><span style="left:118.4px">Personalized music</span></div>
  <div class="row" style="top:228.5px"><span style="left:144.4px">Album cover photo</span></div>
  <div class="row" style="top:263.5px"><span style="left:118.4px">Music player</span></div>
  <div class="row" style="top:298.5px"><span style="left:144.4px">Player</span></div>
  <div class="row" style="top:333.5px"><span style="left:118.4px">Section title</span></div>
  <div class="row" style="top:369.5px"><span style="left:118.4px">Recommendation</span></div>
  <div class="row" style="top:404.5px"><span style="left:144.4px">Lists</span></div>
  <div class="row" style="top:439.5px"><span style="left:118.4px">Section title</span></div>
  <div class="row" style="top:474.5px"><span style="left:118.4px">Recommendation</span></div>
  <div class="row" style="top:509.5px"><span style="left:144.4px">Lists</span></div>
  <div class="row" style="top:545.5px"><span style="left:118.4px">Section title</span></div>
  <div class="row" style="top:580.5px"><span style="left:144.4px">Featured Albums</span></div>
  <div class="row" style="top:615.5px"><span style="left:118.4px">Recommendation</span></div>
  <div class="row" style="top:650.5px"><span style="left:144.4px">Lists</span></div>
  <div class="row" style="top:685.5px"><span style="left:91.5px">Bottom navigation bar</span></div>
  <div class="row" style="top:721.5px"><span style="left:118.4px">Navigation items</span></div>
  <svg class="abs" style="left:0;top:0" width="546" height="730" viewBox="0 0 546 730"><path d="M0.8 53.7l2.800 2.800 2.800-2.800" fill="none" stroke="#a0a0a0" stroke-width="1.100"/><rect x="16.600" y="49.600" width="10.400" height="4" rx="1.300" fill="none" stroke="#e4e7ef" stroke-width="1.100"/><rect x="16.600" y="56.400" width="6.200" height="3.800" rx="1.300" fill="none" stroke="#e4e7ef" stroke-width="1.100"/><path d="M79.8 96.7l2.800 2.800 2.800-2.800" fill="none" stroke="#858ba7" stroke-width="1.100"/><rect x="95.2" y="92.4" width="4" height="10.600" rx="1.200" fill="none" stroke="#858ba7" stroke-width="1.1"/><rect x="102.2" y="94.8" width="4.2" height="6.2" rx="1.2" fill="none" stroke="#858ba7" stroke-width="1.1"/><path d="M108.2 130.4l2.800 2.800-2.800 2.800" fill="none" stroke="#858ba7" stroke-width="1.100"/><path d="M123.6 127.2v11M129.8 127.2v11M121.2 130.0h11M121.2 135.4h11" fill="none" stroke="#858ba7" stroke-width="1.1"/><path d="M108.2 165.4l2.800 2.800-2.800 2.800" fill="none" stroke="#858ba7" stroke-width="1.100"/><rect x="121.6" y="162.5" width="10.400" height="4" rx="1.300" fill="none" stroke="#858ba7" stroke-width="1.1"/><rect x="121.6" y="169.1" width="6.400" height="3.800" rx="1.300" fill="none" stroke="#858ba7" stroke-width="1.1"/><path d="M79.8 202.7l2.800 2.800 2.800-2.800" fill="none" stroke="#858ba7" stroke-width="1.100"/><rect x="95.4" y="198.5" width="10.400" height="4" rx="1.300" fill="none" stroke="#858ba7" stroke-width="1.1"/><rect x="95.4" y="205.1" width="6.400" height="3.800" rx="1.300" fill="none" stroke="#858ba7" stroke-width="1.1"/><path d="M108.2 236.4l2.800 2.800-2.800 2.800" fill="none" stroke="#858ba7" stroke-width="1.100"/><rect x="121.6" y="233.5" width="10.400" height="4" rx="1.300" fill="none" stroke="#858ba7" stroke-width="1.1"/><rect x="121.6" y="240.1" width="6.400" height="3.800" rx="1.300" fill="none" stroke="#858ba7" stroke-width="1.1"/><path d="M79.8 272.7l2.800 2.800 2.800-2.800" fill="none" stroke="#858ba7" stroke-width="1.100"/><rect x="95.4" y="268.5" width="10.400" height="4" rx="1.300" fill="none" stroke="#858ba7" stroke-width="1.1"/><rect x="95.4" y="275.1" width="6.400" height="3.800" rx="1.300" fill="none" stroke="#858ba7" stroke-width="1.1"/><path d="M108.2 306.4l2.800 2.800-2.800 2.800" fill="none" stroke="#858ba7" stroke-width="1.100"/><rect x="121.6" y="303.5" width="10.400" height="4" rx="1.300" fill="none" stroke="#858ba7" stroke-width="1.1"/><rect x="121.6" y="310.1" width="6.400" height="3.800" rx="1.300" fill="none" stroke="#858ba7" stroke-width="1.1"/><path d="M81.1 341.4l2.800 2.800-2.800 2.800" fill="none" stroke="#858ba7" stroke-width="1.100"/><rect x="95.4" y="338.5" width="10.400" height="4" rx="1.300" fill="none" stroke="#858ba7" stroke-width="1.1"/><rect x="95.4" y="345.1" width="6.400" height="3.800" rx="1.300" fill="none" stroke="#858ba7" stroke-width="1.1"/><path d="M79.8 378.7l2.800 2.800 2.800-2.800" fill="none" stroke="#858ba7" stroke-width="1.100"/><rect x="95.2" y="374.4" width="4" height="10.600" rx="1.200" fill="none" stroke="#858ba7" stroke-width="1.1"/><rect x="102.2" y="374.4" width="4.2" height="6.2" rx="1.2" fill="none" stroke="#858ba7" stroke-width="1.1"/><path d="M108.2 412.4l2.800 2.800-2.800 2.800" fill="none" stroke="#858ba7" stroke-width="1.100"/><rect x="121.4" y="409.4" width="4" height="10.600" rx="1.200" fill="none" stroke="#858ba7" stroke-width="1.1"/><rect x="128.4" y="409.4" width="4.2" height="6.2" rx="1.2" fill="none" stroke="#858ba7" stroke-width="1.1"/><path d="M81.1 447.4l2.800 2.800-2.800 2.800" fill="none" stroke="#858ba7" stroke-width="1.100"/><rect x="95.4" y="444.5" width="10.400" height="4" rx="1.300" fill="none" stroke="#858ba7" stroke-width="1.1"/><rect x="95.4" y="451.1" width="6.400" height="3.800" rx="1.300" fill="none" stroke="#858ba7" stroke-width="1.1"/><path d="M79.8 483.7l2.800 2.800 2.800-2.800" fill="none" stroke="#858ba7" stroke-width="1.100"/><rect x="95.2" y="479.4" width="4" height="10.600" rx="1.200" fill="none" stroke="#858ba7" stroke-width="1.1"/><rect x="102.2" y="479.4" width="4.2" height="6.2" rx="1.2" fill="none" stroke="#858ba7" stroke-width="1.1"/><path d="M108.2 517.4l2.800 2.800-2.800 2.800" fill="none" stroke="#858ba7" stroke-width="1.100"/><rect x="121.4" y="514.4" width="4" height="10.600" rx="1.200" fill="none" stroke="#858ba7" stroke-width="1.1"/><rect x="128.4" y="514.4" width="4.2" height="6.2" rx="1.2" fill="none" stroke="#858ba7" stroke-width="1.1"/><path d="M79.8 554.7l2.800 2.800 2.800-2.800" fill="none" stroke="#858ba7" stroke-width="1.100"/><rect x="95.4" y="550.5" width="10.400" height="4" rx="1.300" fill="none" stroke="#858ba7" stroke-width="1.1"/><rect x="95.4" y="557.1" width="6.400" height="3.800" rx="1.300" fill="none" stroke="#858ba7" stroke-width="1.1"/><path d="M122.1 587.9v-2.2h9.2v2.2M126.7 585.7v10M124.9 595.7h3.6" fill="none" stroke="#858ba7" stroke-width="1.1"/><path d="M79.8 624.7l2.800 2.800 2.800-2.800" fill="none" stroke="#858ba7" stroke-width="1.100"/><rect x="95.2" y="620.4" width="4" height="10.600" rx="1.200" fill="none" stroke="#858ba7" stroke-width="1.1"/><rect x="102.2" y="620.4" width="4.2" height="6.2" rx="1.2" fill="none" stroke="#858ba7" stroke-width="1.1"/><path d="M108.2 658.4l2.800 2.800-2.800 2.800" fill="none" stroke="#858ba7" stroke-width="1.100"/><rect x="121.4" y="655.4" width="4" height="10.600" rx="1.200" fill="none" stroke="#858ba7" stroke-width="1.1"/><rect x="128.4" y="655.4" width="4.2" height="6.2" rx="1.2" fill="none" stroke="#858ba7" stroke-width="1.1"/><path d="M53.8 694.7l2.800 2.800 2.800-2.800" fill="none" stroke="#858ba7" stroke-width="1.100"/><rect x="68.2" y="690.5" width="10.400" height="4" rx="1.300" fill="none" stroke="#858ba7" stroke-width="1.1"/><rect x="68.2" y="697.1" width="6.400" height="3.800" rx="1.300" fill="none" stroke="#858ba7" stroke-width="1.1"/><path d="M81.1 729.4l2.800 2.800-2.800 2.800" fill="none" stroke="#858ba7" stroke-width="1.100"/><rect x="95.2" y="726.4" width="4" height="10.600" rx="1.200" fill="none" stroke="#858ba7" stroke-width="1.1"/><rect x="102.2" y="726.4" width="4.2" height="6.2" rx="1.2" fill="none" stroke="#858ba7" stroke-width="1.1"/></svg>
</div>
<div id="hscroll"></div>
<div id="toolbar">
  <div class="act"></div>
  <svg width="420" height="53" viewBox="0 0 420 53" fill="none" stroke="#ececec" stroke-width="1.250" stroke-linecap="round" stroke-linejoin="round">
    <path d="M18.900 18.100L36.300 25.400 29.900 28.500 25.700 35.800z" stroke="#fff" stroke-width="1.500"/>
    <path d="M51 25.500l2.500 2.500 2.500-2.500M113.800 25.500l2.500 2.500 2.500-2.500M175.900 25.500l2.500 2.500 2.500-2.500M238.900 25.500l2.500 2.500 2.500-2.500" stroke="#e6e6e6" stroke-width="1.300"/>
    <path d="M84.400 17.500v17.600M93.500 17.500v17.600M79.900 22h17.900M79.900 30.600h17.900" stroke-width="1.500"/>
    <rect x="143.300" y="17.700" width="17" height="16.600" rx="2.400"/>
    <path d="M205.700 18.700c6-1.300 11.800 0 15.400 2.900l3.500 7.700-7.100 7.100-8.300-4.200c-2.200-4.200-3.200-9.300-3.500-13.500z"/><circle cx="214.900" cy="26.800" r="2.600"/><path d="M205.900 18.900l7 6"/>
    <path d="M268.200 22.200v-3.200h16.600v3.200M276.500 19v14.800M273.200 33.800h7.100"/>
    <path d="M312.300 35.200v-8.700a8.700 8.700 0 1 1 8.700 8.700z"/>
    <path d="M360.200 17.300l4.100 4.100-4.100 4.100-4.100-4.100z"/><rect x="356.200" y="28" width="7.600" height="7.200" rx="1.500"/><circle cx="370.200" cy="21.400" r="3.900"/><path d="M370.200 28.200v7M366.700 31.700h7"/>
  </svg>
</div>
<div id="dialog">
  <svg class="abs" style="left:21.500px;top:13px" width="19" height="19" viewBox="0 0 19 19"><circle cx="9.500" cy="9.500" r="9" fill="#fff"/><path d="M5.300 4.300h6.200a2.900 2.900 0 0 1 2.100 4.900L9.800 9.500z" fill="#18b4f4"/><path d="M5.300 14.700h6.200a2.900 2.900 0 0 0 2.100-4.900L9.800 9.500z" fill="#fd6b3c"/><path d="M5.300 4.300L13.400 9.500 5.300 14.700z" fill="#a97ff2"/></svg>
  <div class="ttl">Builder.io - AI-Powered Figma to Code (...</div>
  <svg class="abs" style="left:345px;top:15px" width="14" height="14" viewBox="0 0 14 14" stroke="#f0f0f0" stroke-width="1.200" stroke-linecap="round"><path d="M2.200 2.200l9.600 9.600M11.800 2.200L2.200 11.800"/></svg>
  <div class="hl" style="top:43px"></div>
  <div class="tabbg"></div>
  <div class="tab" style="left:19px">Export</div>
  <div class="tab" style="left:79.200px">Design with AI</div>
  <div class="tab" style="left:184.300px">Design System</div>
  <div class="tab" style="left:292.400px">Import</div>
  <div class="hl" style="top:89px"></div>
  <h2>Converting design to code</h2>
  <p>This can take a couple minutes. For faster and<br>higher quality results, use <b>Smart Export</b><em>NEW</em></p>
  <div class="box"></div>
  <svg class="abs" style="left:32px;top:239px" width="18" height="18" viewBox="0 0 18 18" fill="none" stroke="#bdbdbd" stroke-width="1.500" stroke-linecap="round"><path d="M8.200 1.400a7.500 7.500 0 1 1-5.800 11.900"/></svg>
  <div class="mono">Analyzing selected figma layers</div>
  <div class="cancel">Cancel</div>
</div>
</body>
</html>
